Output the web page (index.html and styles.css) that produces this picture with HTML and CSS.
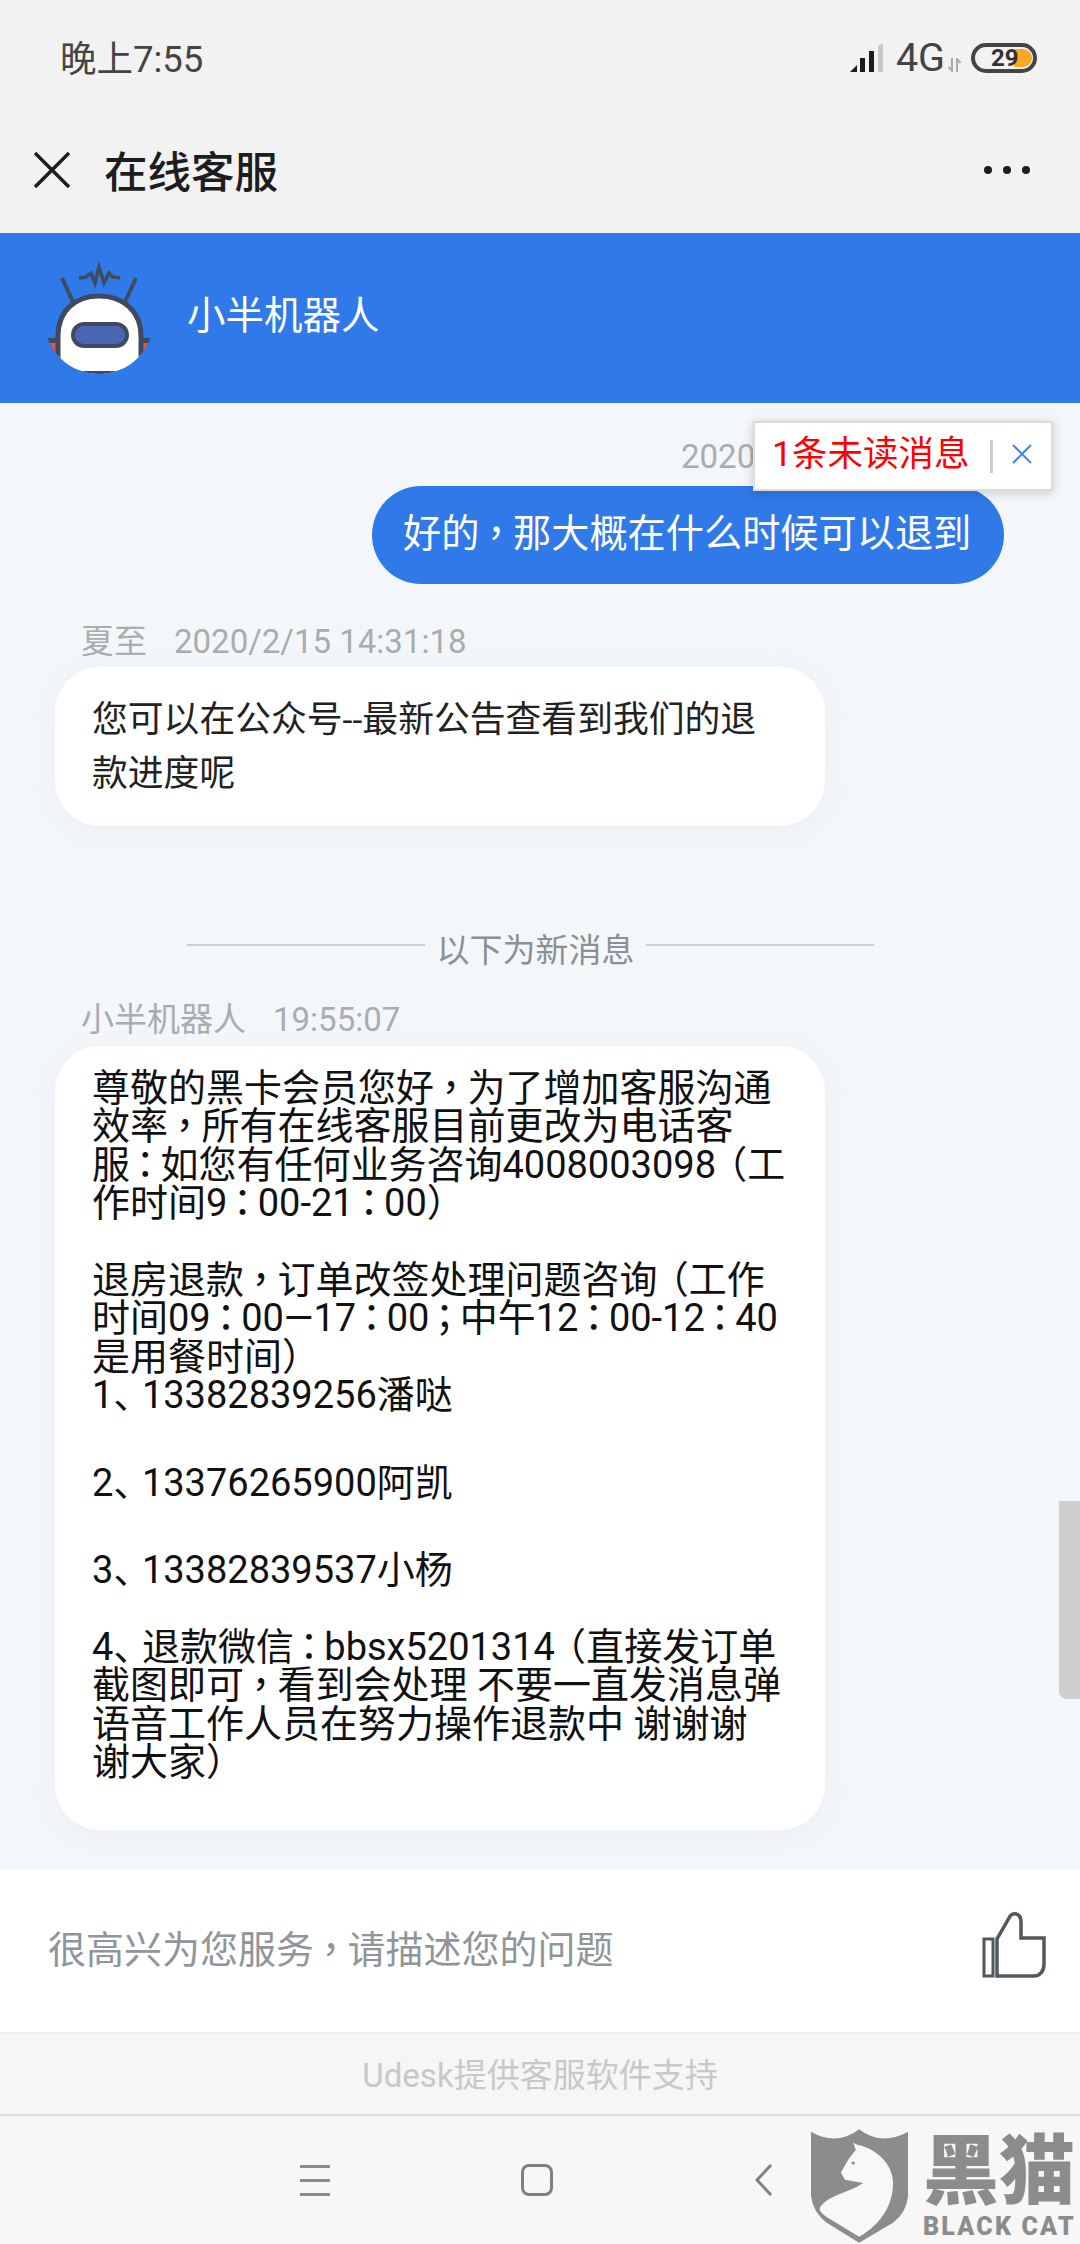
FILE: index.html
```html
<!DOCTYPE html>
<html>
    <head>
        <meta charset="UTF-8">
        <meta name="viewport" content="width=device-width, initial-scale=1.0">
        <title>在线客服</title>
        <link rel="stylesheet" href="styles.css">
    </head>
    <body>
        <!-- status bar -->
        <div class="status">
            <span class="clock">晚上7:55</span>
            <div class="status-right">
                <svg class="signal" width="33" height="29" viewBox="0 0 33 29">
                    <path d="M0 29L7 22V29Z" fill="#1c1c1c"/>
                    <rect x="10" y="15" width="5" height="14" fill="#1c1c1c"/>
                    <rect x="19" y="8" width="5" height="21" fill="#1c1c1c"/>
                    <path d="M28 3L33 0V29H28Z" fill="#c8c8c8"/>
                </svg>
                <span class="net">4G</span>
                <svg class="arrows" width="13" height="14" viewBox="0 0 13 14">
                    <path d="M4 0V13L0.500 9M9 14V1L12.500 5" fill="none" stroke="#a9a9a9" stroke-width="2"/>
                </svg>
                <div class="battery"><span class="battery-level"></span><span class="battery-num">29</span></div>
            </div>
        </div>

        <!-- title bar -->
        <div class="titlebar">
            <svg class="close" width="36" height="36" viewBox="0 0 36 36">
                <path d="M1 1L35 35M35 1L1 35" stroke="#1d1d1d" stroke-width="3.500"/>
            </svg>
            <span class="title">在线客服</span>
            <div class="dots"><i></i><i></i><i></i></div>
        </div>

        <!-- agent bar -->
        <div class="agent">
            <svg class="avatar" width="120" height="125" viewBox="40 255 120 125">
                <defs>
                    <clipPath id="face"><circle cx="99" cy="318" r="55"/></clipPath>
                </defs>
                <path d="M62 277L73 301M136 277L125 301" stroke="#3f4a60" stroke-width="4" fill="none"/>
                <path d="M79 277L86 276L91 272L95 282L99 266L104 282L109 272L113 276L120 277" stroke="#3f4a60" stroke-width="3.500" fill="none"/>
                <g clip-path="url(#face)">
                    <path d="M44 337H156V375H44Z" fill="#3f4a60"/>
                    <path d="M50 342H60V375H50ZM138 342H148V375H138Z" fill="#e2574c"/>
                    <path d="M58 380V335C58 310 75 295 99 295C123 295 141 310 141 335V380Z" fill="#fff" stroke="#3f4a60" stroke-width="5"/>
                    <rect x="40" y="370" width="120" height="10" fill="#3f4a60"/>
                </g>
                <rect x="73" y="323" width="54" height="22" rx="11" fill="#4a66b2" stroke="#3f4a60" stroke-width="4"/>
            </svg>
            <span class="agent-name">小半机器人</span>
        </div>

        <!-- messages -->
        <div class="chat">
            <div class="stamp">2020/2/15 14:31:07</div>
            <div class="bubble-row">
                <div class="bubble-me">好的<span class="c">，</span>那大概在什么时候可以退到</div>
            </div>

            <div class="meta meta-first"><span>夏至</span><span class="meta-time">2020/2/15 14:31:18</span></div>
            <div class="bubble bubble-short">您可以在公众号--最新公告查看到我们的退<br>款进度呢</div>

            <div class="divider"><span class="divider-line"></span><span class="divider-text">以下为新消息</span><span class="divider-line divider-line-right"></span></div>

            <div class="meta"><span>小半机器人</span><span class="meta-time">19:55:07</span></div>
            <div class="bubble bubble-long">
                <p>尊敬的黑卡会员您好<span class="c">，</span>为了增加客服沟通<br>效率<span class="c">，</span>所有在线客服目前更改为电话客<br>服<span class="p">：</span>如您有任何业务咨询4008003098<span class="q">（</span>工<br>作时间9<span class="p">：</span>00-21<span class="p">：</span>00）</p>
                <p class="wide">退房退款<span class="c">，</span>订单改签处理问题咨询<span class="q">（</span>工作<br>时间09<span class="p">：</span>00—17<span class="p">：</span>00<span class="p">；</span>中午12<span class="p">：</span>00-12<span class="p">：</span>40<br>是用餐时间）<br>1<span class="d">、</span>13382839256潘哒</p>
                <p class="wide">2<span class="d">、</span>13376265900阿凯</p>
                <p>3<span class="d">、</span>13382839537小杨</p>
                <p>4<span class="d">、</span>退款微信<span class="p">：</span>bbsx5201314<span class="q">（</span>直接发订单<br>截图即可<span class="c">，</span>看到会处理 不要一直发消息弹<br>语音工作人员在努力操作退款中 谢谢谢<br>谢大家）</p>
            </div>

            <div class="unread">
                <span class="unread-text">1条未读消息</span>
                <span class="unread-sep"></span>
                <svg class="unread-close" width="20" height="20" viewBox="0 0 20 20">
                    <path d="M1 1L19 19M19 1L1 19" stroke="#3f87e8" stroke-width="2"/>
                </svg>
            </div>
            <div class="scrollbar"></div>
        </div>

        <!-- input -->
        <div class="input-row">
            <span class="placeholder">很高兴为您服务<span class="c">，</span>请描述您的问题</span>
            <svg class="thumb" width="64" height="66" viewBox="982 1912 64 66">
                <path d="M984 1939H993V1976H984Z" fill="none" stroke="#50595e" stroke-width="3"/>
                <path d="M997 1976V1939L1009 1918C1012 1911 1021 1913 1021 1922V1938H1044V1964C1044 1971 1040 1976 1034 1976Z" fill="none" stroke="#50595e" stroke-width="3.500"/>
            </svg>
        </div>

        <div class="powered">Udesk提供客服软件支持</div>

        <!-- android nav -->
        <div class="navbar">
            <div class="nav-menu"><i></i><i></i><i></i></div>
            <div class="nav-home"></div>
            <svg class="nav-back" width="18" height="32" viewBox="0 0 18 32">
                <path d="M16 1L2 16L16 31" fill="none" stroke="#808080" stroke-width="3"/>
            </svg>
        </div>

        <!-- watermark -->
        <div class="watermark">
            <svg width="97" height="114" viewBox="93 88 292 342">
                <path d="M93 96Q170 140 238 88Q305 140 385 96V290Q380 340 340 370L238 430L140 370Q100 340 93 290Z" fill="#8c8c8c"/>
                <path d="M220 128L232 135C285 145 340 190 340 250C340 310 310 370 238 412L140 352C120 338 115 330 122 320C150 285 205 280 250 250L195 240L183 218L205 180L228 150Z" fill="#f8f8f8"/>
                <circle cx="220" cy="190" r="5" fill="#8c8c8c"/>
            </svg>
            <div class="mark-text">
                <span class="mark-cn">黑猫</span>
                <span class="mark-en">BLACK CAT</span>
            </div>
        </div>
    </body>
</html>
```

FILE: styles.css
```css
* {
    box-sizing: border-box;
}

body {
    margin: 0;
    width: 1080px;
    height: 2244px;
    position: relative;
    overflow: hidden;
    display: flex;
    flex-direction: column;
    background-color: #f6f6f6;
    color: #222;
    font-family: Roboto, "Noto Sans CJK SC", sans-serif;
}

/* status bar */
.status {
    height: 80px;
    flex: none;
    display: flex;
    justify-content: space-between;
    align-items: flex-end;
    padding: 0 43px 0 60px;
    background-color: #f2f2f2;
}

.clock {
    font-size: 36.500px;
    line-height: 40px;
    color: #444;
}

.status-right {
    display: flex;
    align-items: flex-end;
}

.signal {
    margin-right: 13px;
    margin-bottom: 8px;
}

.net {
    font-size: 39.500px;
    line-height: 40px;
    color: #444;
    margin-bottom: 2px;
}

.arrows {
    margin: 0 10px 8px 3px;
}

.battery {
    position: relative;
    width: 66px;
    height: 30px;
    margin-bottom: 7px;
    border: 4px solid #444;
    border-radius: 15px;
}

.battery-level {
    position: absolute;
    right: 1px;
    top: 2px;
    width: 18px;
    height: 18px;
    background-color: #f9a825;
    border-radius: 0 9px 9px 0;
}

.battery-num {
    position: absolute;
    left: 16px;
    top: 0;
    font-size: 24px;
    line-height: 22px;
    font-weight: bold;
    color: #333;
}

/* title bar */
.titlebar {
    height: 153px;
    flex: none;
    display: flex;
    align-items: center;
    padding: 26px 50px 0 34px;
    background-color: #f2f2f2;
}

.title {
    margin-left: 34px;
    font-size: 43.500px;
    font-weight: 500;
    color: #1d1d1d;
}

.dots {
    margin-left: auto;
    display: flex;
    gap: 11px;
}

.dots i {
    width: 8px;
    height: 8px;
    border-radius: 50%;
    background-color: #1d1d1d;
}

/* agent bar */
.agent {
    height: 170px;
    flex: none;
    display: flex;
    align-items: center;
    padding-left: 40px;
    background-color: #2f79e8;
}

.agent-name {
    margin-left: 27px;
    margin-bottom: 13px;
    font-size: 38.500px;
    font-weight: 400;
    color: #fff;
}

/* messages */
.chat {
    position: relative;
    flex: none;
    height: 1466px;
    padding: 35px 0 0 55px;
    background-color: #f4f7fa;
}

.stamp {
    padding-left: 626px;
    font-size: 33px;
    line-height: 38px;
    color: #a8adb0;
    white-space: nowrap;
}

.bubble-row {
    margin-top: 10px;
    padding-left: 317px;
}

.bubble-me {
    width: 632px;
    height: 98px;
    border-radius: 49px;
    background-color: #2f79e8;
    color: #fff;
    font-size: 38.200px;
    line-height: 96px;
    padding-left: 31px;
    white-space: nowrap;
}

.meta {
    padding-left: 26px;
    font-size: 33px;
    line-height: 40px;
    color: #a8adb0;
    margin-top: 34px;
    margin-bottom: 6px;
    white-space: nowrap;
}

.meta-first {
    margin-top: 38px;
    margin-bottom: 5px;
}

.meta-time {
    margin-left: 27px;
}

.bubble {
    width: 770px;
    border-radius: 45px;
    background-color: #fff;
    box-shadow: 0 4px 24px rgba(120, 140, 160, 0.08);
    padding-left: 37px;
    white-space: nowrap;
}

.bubble-short {
    padding-top: 26px;
    padding-bottom: 25px;
    font-size: 35.800px;
    line-height: 54px;
}

.bubble-long {
    padding-top: 23px;
    padding-bottom: 49px;
    font-size: 38px;
    line-height: 38.400px;
    color: #111;
}

.bubble-long p {
    margin: 0 0 38.400px 0;
}

.bubble-long p.wide {
    margin-bottom: 49px;
}

.bubble-long p:last-child {
    margin-bottom: 0;
}

/* full width punctuation, drawn centered and narrower than a hanzi */
.c {
    font-family: "Noto Sans CJK TC", sans-serif;
    margin-left: -0.06em;
    letter-spacing: -0.06em;
    line-height: 0;
}

.p {
    font-family: "Noto Sans CJK TC", sans-serif;
    margin-left: -0.1em;
    letter-spacing: -0.1em;
    line-height: 0;
}

.q {
    margin-left: -0.18em;
    line-height: 0;
}

.d {
    letter-spacing: -0.25em;
    line-height: 0;
}

.divider {
    margin-top: 100px;
    padding-left: 132px;
    height: 40px;
    display: flex;
    align-items: center;
}

.divider-line {
    width: 238px;
    height: 2px;
    margin-top: -2px;
    background-color: #cdd0d3;
}

.divider-line-right {
    width: 228px;
}

.divider-text {
    width: 221px;
    padding-top: 4px;
    text-align: center;
    font-size: 33px;
    color: #8b9094;
}

/* unread popup */
.unread {
    position: absolute;
    left: 753px;
    top: 18px;
    width: 300px;
    height: 70px;
    display: flex;
    align-items: center;
    padding-left: 17px;
    padding-bottom: 12px;
    background-color: #fff;
    border: 2px solid #dcdcdc;
    box-shadow: 0 2px 10px rgba(0, 0, 0, 0.18);
}

.unread-text {
    font-size: 35.500px;
    color: #f00;
    white-space: nowrap;
}

.unread-sep {
    width: 3px;
    height: 33px;
    margin: 12px 19px 0 21px;
    background-color: #ccc;
}

.unread-close {
    margin-top: 8px;
}

.scrollbar {
    position: absolute;
    right: 0;
    top: 1098px;
    width: 21px;
    height: 198px;
    border-radius: 0 0 0 8px;
    background-color: #cfcfcf;
}

/* input */
.input-row {
    height: 163px;
    flex: none;
    display: flex;
    align-items: center;
    justify-content: space-between;
    padding: 0 34px 8px 48px;
    background-color: #fff;
}

.placeholder {
    font-size: 38px;
    color: #8f9599;
    white-space: nowrap;
}

.thumb {
    margin-bottom: 4px;
}

.powered {
    height: 84px;
    flex: none;
    border-top: 2px solid #eee;
    border-bottom: 2px solid #ddd;
    background-color: #f6f6f6;
    color: #c8c8c8;
    font-size: 33px;
    line-height: 84px;
    text-align: center;
}

/* android nav */
.navbar {
    flex: 1;
    display: flex;
    align-items: center;
    padding: 0 0 0 300px;
    background-color: #f7f7f7;
}

.nav-menu {
    width: 30px;
    display: flex;
    flex-direction: column;
    gap: 11px;
}

.nav-menu i {
    height: 3px;
    background-color: #8a8a8a;
}

.nav-home {
    width: 32px;
    height: 32px;
    margin-left: 191px;
    border: 3.500px solid #808080;
    border-radius: 8px;
}

.nav-back {
    margin-left: 202px;
}

/* watermark, sits on top of the nav bar */
.watermark {
    position: absolute;
    left: 811px;
    top: 2129px;
    width: 269px;
    display: flex;
    color: #8c8c8c;
}

.mark-text {
    margin-left: 15px;
    display: flex;
    flex-direction: column;
}

.mark-cn {
    margin-top: 1px;
    font-size: 76px;
    line-height: 84px;
    font-weight: 900;
    white-space: nowrap;
}

.mark-en {
    margin-top: 1px;
    font-size: 25px;
    line-height: 24px;
    font-weight: 900;
    letter-spacing: 2.200px;
    white-space: nowrap;
}
```
